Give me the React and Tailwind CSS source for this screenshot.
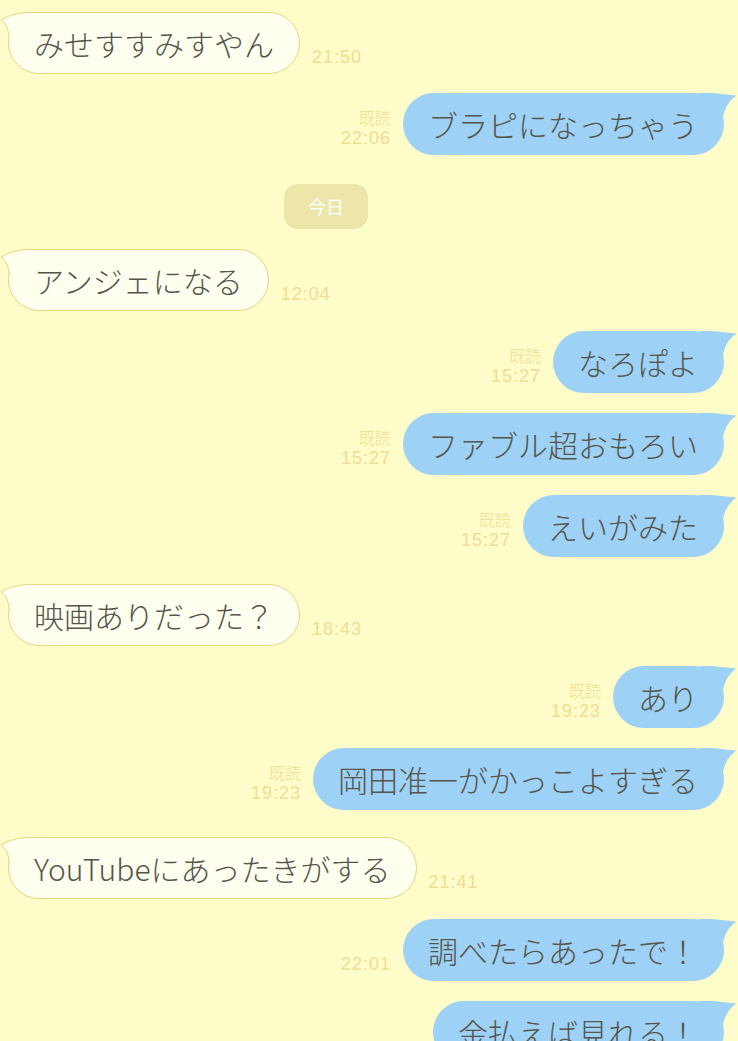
import React from 'react';

const messages = [
  { side: 'left', text: 'みせすすみすやん', time: '21:50', gap: 'mt-3' },
  { side: 'right', text: 'ブラピになっちゃう', time: '22:06', read: true, gap: 'mt-[19px]' },
  { type: 'day', label: '今日', gap: 'mt-[29px]' },
  { side: 'left', text: 'アンジェになる', time: '12:04', gap: 'mt-5' },
  { side: 'right', text: 'なろぽよ', time: '15:27', read: true, gap: 'mt-5' },
  { side: 'right', text: 'ファブル超おもろい', time: '15:27', read: true, gap: 'mt-5' },
  { side: 'right', text: 'えいがみた', time: '15:27', read: true, gap: 'mt-5' },
  { side: 'left', text: '映画ありだった？', time: '18:43', gap: 'mt-[27px]' },
  { side: 'right', text: 'あり', time: '19:23', read: true, gap: 'mt-5' },
  { side: 'right', text: '岡田准一がかっこよすぎる', time: '19:23', read: true, gap: 'mt-5' },
  { side: 'left', text: 'YouTubeにあったきがする', time: '21:41', gap: 'mt-[27px]' },
  { side: 'right', text: '調べたらあったで！', time: '22:01', gap: 'mt-5' },
  { side: 'right', text: '金払えば見れる！', gap: 'mt-5' },
];

const jp = { fontFamily: '"Noto Sans CJK JP", "Noto Sans", sans-serif' };

function Meta({ read, time, align }) {
  return (
    <div className={`flex flex-col mb-[6px] ${align}`}>
      {read && (
        <span className="text-[16px] leading-[20px] font-light text-[#f0dc97]" style={jp}>
          既読
        </span>
      )}
      {time && (
        <span className="text-[18px] leading-[22px] tracking-[1px] text-[#f0dc97] font-['Liberation_Sans',sans-serif]">
          {time}
        </span>
      )}
    </div>
  );
}

function LeftBubble({ text, time }) {
  return (
    <div className="flex items-end pl-2">
      <div className="relative h-[62px] flex items-center px-[25px] rounded-full bg-[#fffff0] border border-[#e6d682]">
        <svg className="absolute -left-[9px] -top-px" width="40" height="30" viewBox="0 0 40 30">
          <path d="M40 1 L26 1 C15 2 7 5 1.5 8 C6 12 9 17 9.6 25 L40 25 Z" fill="#fffff0" />
          <path d="M40 0.5 L26 0.5 C15 1.5 7 4.5 1 7.8 C6 12 8.6 17 9 25" fill="none" stroke="#e6d682" strokeWidth="1" />
        </svg>
        <span className="relative text-[30px] font-light text-[#55554b] whitespace-nowrap" style={jp}>
          {text}
        </span>
      </div>
      <div className="ml-3">
        <Meta time={time} align="items-start" />
      </div>
    </div>
  );
}

function RightBubble({ text, time, read }) {
  return (
    <div className="flex items-end justify-end pr-[14px]">
      <div className="mr-3">
        <Meta read={read} time={time} align="items-end" />
      </div>
      <div className="relative h-[62px] flex items-center pl-[25px] pr-[26px] rounded-full bg-[#9dd1f6]">
        <svg className="absolute -right-[14px] top-0" width="38" height="28" viewBox="0 0 38 28">
          <path d="M0 0 L12 0 C22 1 30 2 36.5 2.5 C30 7 25 13 22.5 26 L0 26 Z" fill="#9dd1f6" />
        </svg>
        <span className="relative text-[30px] font-light text-[#55554b] whitespace-nowrap" style={jp}>
          {text}
        </span>
      </div>
    </div>
  );
}

export default function App() {
  return (
    <div className="w-[738px] h-[1041px] overflow-hidden bg-[#fefcc8]">
      {messages.map((m, i) => (
        <div key={i} className={m.gap}>
          {m.type === 'day' ? (
            <div className="ml-[284px] w-[84px] h-[45px] rounded-[14px] bg-[#ede6aa] flex items-center justify-center">
              <span className="text-[18px] text-white" style={jp}>
                {m.label}
              </span>
            </div>
          ) : m.side === 'left' ? (
            <LeftBubble text={m.text} time={m.time} />
          ) : (
            <RightBubble text={m.text} time={m.time} read={m.read} />
          )}
        </div>
      ))}
    </div>
  );
}
